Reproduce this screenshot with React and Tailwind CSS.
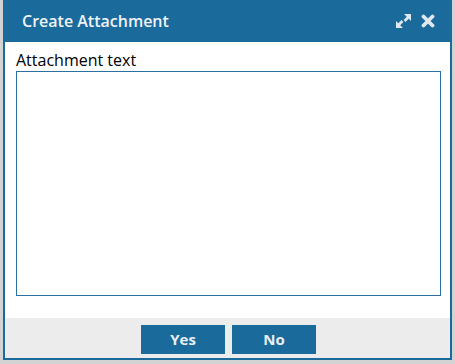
export default function App() {
  return (
    <div className="w-[455px] h-[364px] bg-[#d3d3d3] px-[3px] font-['Open_Sans',sans-serif]">
      <div className="w-[449px] h-[360px] bg-[#1b6a9c] flex flex-col px-[2px] pb-[2px]">
        {/* header */}
        <div className="h-[42px] shrink-0 -mx-[2px] flex items-center justify-between pl-[19px] pr-[17px]">
          <span className="text-[16px] font-semibold text-[#eef3f7] leading-none">Create Attachment</span>
          <div className="flex items-center gap-[9px] text-[#dfe8ef]">
            <svg width="17" height="16" viewBox="0 0 17 16" fill="currentColor">
              <path d="M9 1h7v7l-2.3-2.3-3.2 3.2-1.9-1.9 3.2-3.2z" />
              <path d="M8 15H1V8l2.3 2.3 3.2-3.2 1.9 1.9-3.2 3.2z" />
            </svg>
            <svg width="14" height="14" viewBox="0 0 14 14" fill="none" stroke="currentColor" strokeWidth="3.8" strokeLinecap="round">
              <path d="M2.5 2.5l9 9M11.5 2.5l-9 9" />
            </svg>
          </div>
        </div>
        {/* body */}
        <div className="flex-1 bg-white pl-[11px] pr-[9px] pt-[7px]">
          <div className="text-[16px] leading-[22px] text-black">Attachment text</div>
          <textarea className="block w-full h-[225px] border border-[#2a70a0] resize-none outline-none" />
        </div>
        {/* footer */}
        <div className="h-[40px] shrink-0 bg-[#ececec] flex justify-center gap-[7px] pt-[7px] pl-[2px]">
          <button className="w-[84px] h-[29px] bg-[#1b6a9c] text-[#e8eff5] text-[15px] font-bold">Yes</button>
          <button className="w-[84px] h-[29px] bg-[#1b6a9c] text-[#e8eff5] text-[15px] font-bold">No</button>
        </div>
      </div>
    </div>
  )
}
